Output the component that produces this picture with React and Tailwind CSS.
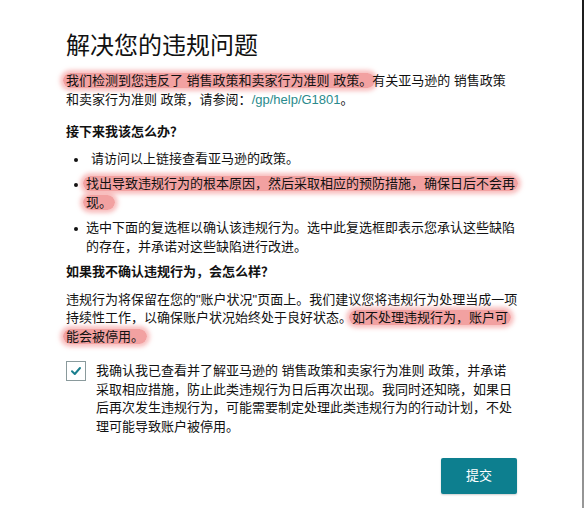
import React from 'react';

const Mark = ({ children }) => (
  <span className="rounded-full bg-[#f2a1a1] shadow-[0_0_4px_3px_rgba(246,170,170,0.75)] box-decoration-clone px-[3px] -mx-[3px]">
    {children}
  </span>
);

const Bullet = ({ children }) => (
  <li className="flex items-start">
    <span className="w-[20px] shrink-0 flex justify-start pl-[8px] pt-[8px]">
      <span className="block w-[4px] h-[4px] rounded-full bg-[#111]" />
    </span>
    <span>{children}</span>
  </li>
);

const App = () => {
  return (
    <div className="flex w-[584px] h-[508px] bg-white font-['Liberation_Sans','Noto_Sans_CJK_SC',sans-serif] text-[13px] leading-[18.5px] text-[#111]">
      <div className="flex-1 flex flex-col pl-[66px] pt-[31px]">
        <h1 className="text-[24px] leading-[30px] font-normal text-[#111]">解决您的违规问题</h1>

        <p className="mt-[11px] w-[480px]">
          <Mark>我们检测到您违反了 销售政策和卖家行为准则 政策。</Mark>有关亚马逊的 销售政策<br />
          和卖家行为准则 政策，请参阅：<span className="text-[#2a8a8c]">/gp/help/G1801</span>。
        </p>

        {/* What to do */}
        <h2 className="mt-[14px] font-bold">接下来我该怎么办？</h2>
        <ul className="mt-[8px] flex flex-col gap-[7px]">
          <Bullet><span className="pl-[5px]">请访问以上链接查看亚马逊的政策。</span></Bullet>
          <Bullet>
            <Mark>找出导致违规行为的根本原因，然后采取相应的预防措施，确保日后不会再<br />现。</Mark>
          </Bullet>
          <Bullet>
            选中下面的复选框以确认该违规行为。选中此复选框即表示您承认这些缺陷<br />
            的存在，并承诺对这些缺陷进行改进。
          </Bullet>
        </ul>

        {/* What if not */}
        <h2 className="mt-[7px] font-bold">如果我不确认违规行为，会怎么样？</h2>
        <p className="mt-[9px]">
          违规行为将保留在您的"账户状况"页面上。我们建议您将违规行为处理当成一项<br />
          持续性工作，以确保账户状况始终处于良好状态。<Mark>如不处理违规行为，账户可<br />能会被停用。</Mark>
        </p>

        {/* Confirm */}
        <div className="mt-[16px] flex items-start gap-[10px]">
          <span className="mt-[-1px] w-[20px] h-[20px] shrink-0 border border-[#8a9a9c] bg-white flex items-center justify-center">
            <svg width="12" height="12" viewBox="0 0 12 12" fill="none">
              <path d="M2 6.2 L4.8 9 L10 3" stroke="#1a7f8e" strokeWidth="2" strokeLinecap="round" strokeLinejoin="round" />
            </svg>
          </span>
          <p>
            我确认我已查看并了解亚马逊的 销售政策和卖家行为准则 政策，并承诺<br />
            采取相应措施，防止此类违规行为日后再次出现。我同时还知晓，如果日<br />
            后再次发生违规行为，可能需要制定处理此类违规行为的行动计划，不处<br />
            理可能导致账户被停用。
          </p>
        </div>

        <div className="mt-[22px] w-[451px] flex justify-end">
          <button className="w-[76px] h-[36px] bg-[#0d7f8f] text-white text-[13px] rounded-[2px] shadow-[0_1px_2px_rgba(0,0,0,0.2)]">
            提交
          </button>
        </div>
      </div>
      <div className="w-[2px] bg-linear-to-b from-[#1a1a1a] via-[#555] to-[#999]" />
    </div>
  );
};

export default App;
